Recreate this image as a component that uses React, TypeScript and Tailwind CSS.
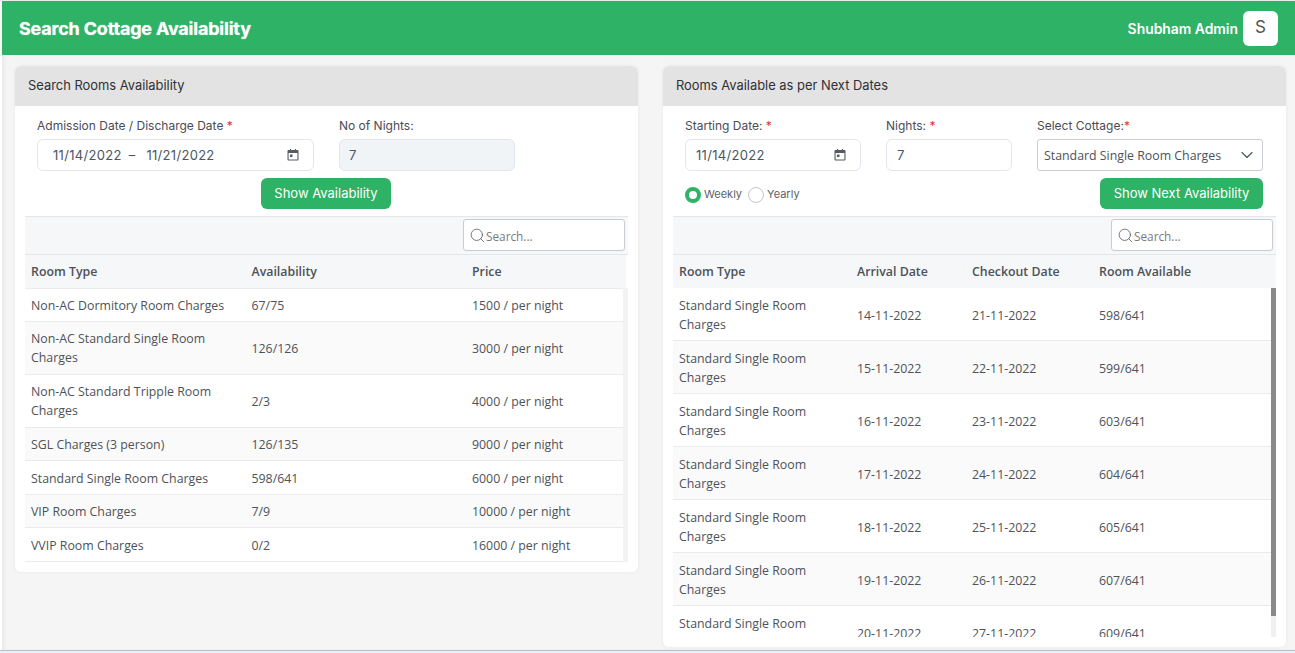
import { ChevronDown, Search } from "lucide-react";

const leftRows = [
  ["Non-AC Dormitory Room Charges", "67/75", "1500 / per night"],
  ["Non-AC Standard Single Room Charges", "126/126", "3000 / per night"],
  ["Non-AC Standard Tripple Room Charges", "2/3", "4000 / per night"],
  ["SGL Charges (3 person)", "126/135", "9000 / per night"],
  ["Standard Single Room Charges", "598/641", "6000 / per night"],
  ["VIP Room Charges", "7/9", "10000 / per night"],
  ["VVIP Room Charges", "0/2", "16000 / per night"],
];

const rowHeights = ["h-[33.5px]", "h-[53px]", "h-[53px]", "h-[33px]", "h-[33.5px]", "h-[33px]", "h-[34px]"];
const rowPads = ["pt-[2px]", "", "", "", "pt-[2px]", "pt-[2px]", "pt-[3px]"];

const rightRows = [
  ["14-11-2022", "21-11-2022", "598/641"],
  ["15-11-2022", "22-11-2022", "599/641"],
  ["16-11-2022", "23-11-2022", "603/641"],
  ["17-11-2022", "24-11-2022", "604/641"],
  ["18-11-2022", "25-11-2022", "605/641"],
  ["19-11-2022", "26-11-2022", "607/641"],
  ["20-11-2022", "27-11-2022", "609/641"],
];

const inter = "font-['Inter',sans-serif]";
const openSans = "font-['Open_Sans',sans-serif]";
const inputBox = `flex h-[32px] items-center rounded-[6px] border border-[#e4e6ef] pt-[2px] text-[13px] tracking-[0.3px] text-[#4b5563] ${inter}`;

function Req() {
  return <span className="text-[#e5303a]"> *</span>;
}

function CalendarIcon() {
  return (
    <svg width="12" height="12" viewBox="0 0 12 12" className="-mt-[2px] ml-auto text-[#555b63]" fill="currentColor">
      <path d="M3 0h1v1h4V0h1v1h1.5A1 1 0 0 1 11.5 2v8.5a1 1 0 0 1-1 1h-9a1 1 0 0 1-1-1V2a1 1 0 0 1 1-1H3zM1.6 4v6.4h8.8V4z" />
      <rect x="3" y="5.5" width="2.5" height="2.5" />
    </svg>
  );
}

function FieldLabel({ children }: { children: React.ReactNode }) {
  return <label className={`mb-[4px] block h-[18px] text-[12px] leading-[18px] text-[#4b4b55] ${inter}`}>{children}</label>;
}

function SearchBox({ width }: { width: string }) {
  return (
    <div className={`flex h-[32px] items-center rounded-[3px] border border-[#c9ccd1] bg-white pl-[5px] ${width}`}>
      <Search size={17} strokeWidth={1.2} className="text-[#5f6368]" />
      <span className={`pt-[3px] text-[11.8px] text-[#777b80] ${openSans}`}>Search...</span>
    </div>
  );
}

function GreenButton({ children, className }: { children: React.ReactNode; className: string }) {
  return (
    <button className={`h-[31px] rounded-[6px] bg-[#2eb265] text-[13px] text-white ${inter} ${className}`}>
      {children}
    </button>
  );
}

function CardHead({ title }: { title: string }) {
  return (
    <div className={`flex h-[40px] items-center rounded-t-[6px] bg-[#e3e3e3] pl-[13px] text-[12.9px] text-[#2f3136] ${inter}`}>
      {title}
    </div>
  );
}

function LeftCard() {
  return (
    <section className="h-[506px] w-[623px] rounded-[6px] bg-white shadow-[0_0_4px_rgba(0,0,0,0.06)]">
      <CardHead title="Search Rooms Availability" />
      <div className="flex gap-[25px] pl-[22px] pt-[11px]">
        <div className="w-[277px]">
          <FieldLabel>
            Admission Date / Discharge Date<Req />
          </FieldLabel>
          <div className={`${inputBox} pl-[15px] pr-[14px]`}>
            <span>11/14/2022</span>
            <span className="ml-[7px]">–</span>
            <span className="ml-[11px]">11/21/2022</span>
            <CalendarIcon />
          </div>
        </div>
        <div className="w-[176px]">
          <FieldLabel>No of Nights:</FieldLabel>
          <div className={`${inputBox} bg-[#f1f4f7] pl-[9px]`}>7</div>
        </div>
      </div>
      <div className="mt-[7px] flex pl-[246px]">
        <GreenButton className="w-[130px]">Show Availability</GreenButton>
      </div>
      <div className="mx-[10px] mt-[7px] w-[603px] border-t border-[#e4e6ea]">
        <div className="flex h-[38px] items-start justify-end border-b border-[#e4e6ea] bg-[#f6f7f8] pr-[3px] pt-[2px]">
          <SearchBox width="w-[162px]" />
        </div>
        <table className={`w-full table-fixed text-[12.35px] text-[#4d5259] ${openSans}`}>
          <colgroup>
            <col className="w-[220.5px]" />
            <col className="w-[220.5px]" />
            <col />
          </colgroup>
          <thead>
            <tr className="h-[33px] bg-[#f6f7f8] text-left">
              <th className="pl-[6px] pt-[2px] font-semibold">Room Type</th>
              <th className="pl-[6px] pt-[2px] font-semibold">Availability</th>
              <th className="pl-[6px] pt-[2px] font-semibold">Price</th>
            </tr>
          </thead>
          <tbody className="border-r-[5px] border-[#f3f3f3]">
            {leftRows.map((r, i) => (
              <tr key={r[0]} className={`border-y border-[#e9ebee] leading-[19px] ${i % 2 ? "bg-[#fafafa]" : "bg-white"}`}>
                <td className={`pl-[6px] pr-[10px] ${rowHeights[i]} ${rowPads[i]}`}>{r[0]}</td>
                <td className={`pl-[6px] ${rowPads[i]}`}>{r[1]}</td>
                <td className={`pl-[6px] ${rowPads[i]}`}>{r[2]}</td>
              </tr>
            ))}
          </tbody>
        </table>
      </div>
    </section>
  );
}

function RightCard() {
  return (
    <section className="h-[581px] w-[623px] rounded-[6px] bg-white shadow-[0_0_4px_rgba(0,0,0,0.06)]">
      <CardHead title="Rooms Available as per Next Dates" />
      <div className="flex pl-[22px] pt-[11px]">
        <div className="w-[176px]">
          <FieldLabel>
            Starting Date:<Req />
          </FieldLabel>
          <div className={`${inputBox} pl-[10px] pr-[14px]`}>
            <span>11/14/2022</span>
            <CalendarIcon />
          </div>
        </div>
        <div className="ml-[25px] w-[126px]">
          <FieldLabel>
            Nights:<Req />
          </FieldLabel>
          <div className={`${inputBox} pl-[10px]`}>7</div>
        </div>
        <div className="ml-[25px] w-[226px]">
          <FieldLabel>
            Select Cottage:<span className="text-[#e5303a]">*</span>
          </FieldLabel>
          <div className={`flex h-[32px] items-center rounded-[3px] border border-[#c9ccd1] pl-[6px] pr-[5px] pt-[2px] text-[12.35px] text-[#4d5259] ${openSans}`}>
            <span>Standard Single Room Charges</span>
            <ChevronDown size={20} strokeWidth={1.4} className="-mt-[2px] ml-auto text-[#4b5563]" />
          </div>
        </div>
      </div>
      <div className="mt-[7px] flex h-[31px] items-center pl-[22px] pr-[23px]">
        <span className="mt-[3px] box-border h-[16px] w-[16px] rounded-full border-[4px] border-[#2eb265] bg-white" />
        <span className={`ml-[3px] mt-[2px] text-[11px] text-[#5c5f66] ${inter}`}>Weekly</span>
        <span className="ml-[6px] mt-[3px] box-border h-[16px] w-[16px] rounded-full border-[1.5px] border-[#c4c6ca] bg-white" />
        <span className={`ml-[3px] mt-[2px] text-[11px] text-[#5c5f66] ${inter}`}>Yearly</span>
        <GreenButton className="ml-auto w-[163px]">Show Next Availability</GreenButton>
      </div>
      <div className="mx-[10px] mt-[7px] w-[603px] border-t border-[#e4e6ea]">
        <div className="flex h-[38px] items-start justify-end border-b border-[#e4e6ea] bg-[#f6f7f8] pr-[3px] pt-[2px]">
          <SearchBox width="w-[162px]" />
        </div>
        <div className={`flex h-[33px] items-center bg-[#f6f7f8] pt-[2px] text-[12.35px] font-semibold text-[#4d5259] ${openSans}`}>
          <div className="w-[178px] pl-[6px]">Room Type</div>
          <div className="w-[115px] pl-[6px]">Arrival Date</div>
          <div className="w-[127px] pl-[6px]">Checkout Date</div>
          <div className="pl-[6px]">Room Available</div>
        </div>
        <div className="relative h-[349px] overflow-hidden">
          {rightRows.map((r, i) => (
            <div
              key={r[0]}
              className={`flex h-[53px] items-center border-b border-[#e9ebee] pr-[5px] pt-[2px] text-[12.35px] leading-[19px] text-[#4d5259] ${openSans} ${i % 2 ? "bg-[#fafafa]" : "bg-white"}`}
            >
              <div className="w-[178px] pl-[6px] pr-[30px]">Standard Single Room Charges</div>
              <div className="w-[115px] pl-[6px]">{r[0]}</div>
              <div className="w-[127px] pl-[6px]">{r[1]}</div>
              <div className="pl-[6px]">{r[2]}</div>
            </div>
          ))}
          <div className="absolute right-0 top-0 h-full w-[5px] bg-[#f0f0f0]">
            <div className="h-[328px] bg-[#8a8a8a]" />
          </div>
        </div>
      </div>
    </section>
  );
}

export default function App() {
  return (
    <div className="flex h-[653px] w-[1295px] flex-col overflow-hidden bg-[#eaf0f6] pt-[1px]">
      <div className="flex min-h-0 flex-1 flex-col border-b border-[#b9bec4] bg-white pl-[2px]">
        <header className={`flex h-[54px] shrink-0 items-center bg-[#2eb265] pl-[17px] pr-[17px] shadow-[0_2px_4px_rgba(0,0,0,0.1)] ${inter}`}>
          <h1 className="text-[18px] font-bold tracking-[-0.2px] text-white [text-shadow:0_0_1px_rgba(255,255,255,0.7)]">Search Cottage Availability</h1>
          <span className="ml-auto pt-[2px] text-[13.9px] font-semibold text-white">Shubham Admin</span>
          <span className="ml-[5px] flex h-[35px] w-[35px] items-center justify-center rounded-[6px] bg-white text-[17px] text-[#555]">S</span>
        </header>
        <main className="flex min-h-0 flex-1 items-start gap-[25px] bg-[#f5f5f5] pl-[13px] pt-[11px] shadow-[inset_3px_0_3px_rgba(0,0,0,0.04)]">
          <LeftCard />
          <RightCard />
        </main>
      </div>
      <div className="h-[2px]" />
    </div>
  );
}
